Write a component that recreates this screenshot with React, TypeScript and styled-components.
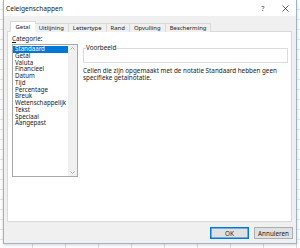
import { createGlobalStyle, styled } from 'styled-components';

const GlobalStyle = createGlobalStyle`
  html, body {
    margin: 0;
    padding: 0;
  }
  body {
    font-family: 'Noto Sans', 'Open Sans', sans-serif;
    color: #1a1a1a;
  }
  * {
    box-sizing: border-box;
  }
`;

const Desktop = styled.div`
  width: 300px;
  height: 248px;
  padding: 0 3px 4px 3px;
  background-color: #ffffff;
  background-image: repeating-linear-gradient(
      to right,
      transparent 0 32px,
      #dcdcdc 32px 33px
    ),
    repeating-linear-gradient(to bottom, transparent 0 9px, #e4e4e4 9px 10px);
  overflow: hidden;
`;

const Dialog = styled.div`
  height: 244px;
  display: flex;
  flex-direction: column;
  background: #f0f0f0;
  border: 1px solid #9db3c8;
  border-top: none;
  box-shadow: 0 1px 3px rgba(0, 0, 0, 0.18);
`;

const TitleBar = styled.div`
  height: 16px;
  flex: none;
  display: flex;
  align-items: center;
  padding: 1px 0 0 2px;
  background: #ffffff;
  font-size: 6.6px;
`;

const Title = styled.div`
  flex: 1;
`;

const TitleButton = styled.div`
  width: 22px;
  display: flex;
  justify-content: center;
  font-size: 6.6px;
  color: #333;
`;

const TabStrip = styled.div`
  flex: none;
  height: 15px;
  display: flex;
  align-items: flex-end;
  padding: 0 0 0 7px;
  position: relative;
  z-index: 1;
`;

const Tab = styled.div<{ $active?: boolean }>`
  height: ${(p) => (p.$active ? '11px' : '9px')};
  display: flex;
  align-items: center;
  justify-content: center;
  padding: 0 ${(p) => (p.$active ? '4.5px' : '4px')};
  margin: 0 ${(p) => (p.$active ? '-1px' : '0')} -1px;
  background: ${(p) => (p.$active ? '#ffffff' : '#f0f0f0')};
  border: 1px solid #d9d9d9;
  border-bottom: ${(p) => (p.$active ? '1px solid #ffffff' : 'none')};
  border-left-width: ${(p) => (p.$active ? '1px' : '0')};
  font-size: 5.95px;
  white-space: nowrap;

  &:first-child {
    border-left-width: 1px;
  }
`;

const Panel = styled.div`
  flex: 1;
  margin: 0 4px 0 3px;
  background: #ffffff;
  border: 1px solid #d9d9d9;
  display: flex;
  gap: 5px;
  padding: 3px 0 0 4px;
`;

const LeftColumn = styled.div`
  display: flex;
  flex-direction: column;
  gap: 1px;
`;

const Label = styled.div`
  font-size: 6.3px;
  line-height: 8px;

  & u {
    text-decoration-thickness: 0.5px;
  }
`;

const ListBox = styled.div`
  width: 66px;
  height: 133px;
  border: 1px solid #a8a8a8;
  display: flex;
  background: #ffffff;
`;

const Items = styled.div`
  flex: 1;
  padding-top: 1px;
`;

const Item = styled.div<{ $selected?: boolean }>`
  height: 6.75px;
  line-height: 6.75px;
  padding-left: 2px;
  font-size: 6.2px;
  white-space: nowrap;
  background: ${(p) => (p.$selected ? '#0078d7' : 'transparent')};
  color: ${(p) => (p.$selected ? '#ffffff' : '#1a1a1a')};
`;

const ScrollBar = styled.div`
  width: 9px;
  background: #f0f0f0;
  display: flex;
  flex-direction: column;
  justify-content: space-between;
  align-items: center;
  padding: 2px 0;
`;

const RightColumn = styled.div`
  flex: 1;
  padding: 13px 3px 0 0;
  display: flex;
  flex-direction: column;
  gap: 4px;
`;

const GroupBox = styled.fieldset`
  margin: 0;
  height: 18px;
  padding: 0 0 0 2px;
  border: 1px solid #dcdcdc;
  border-radius: 0;
  position: relative;
  top: -3px;
`;

const Legend = styled.legend`
  font-size: 6.3px;
  line-height: 6px;
  padding: 0;
  color: #1a1a1a;
`;

const Description = styled.div`
  font-size: 6.3px;
  line-height: 7px;
  margin-top: -3px;
`;

const ButtonBar = styled.div`
  flex: none;
  height: 21px;
  display: flex;
  justify-content: flex-end;
  align-items: center;
  gap: 5px;
  padding: 1px 3px 0 0;
`;

const Button = styled.button<{ $default?: boolean }>`
  width: 39px;
  height: 12px;
  padding: 0;
  font-family: inherit;
  font-size: 6.3px;
  color: #1a1a1a;
  background: #e1e1e1;
  border: 1px solid ${(p) => (p.$default ? '#0078d7' : '#adadad')};
  box-shadow: ${(p) => (p.$default ? 'inset 0 0 0 0.5px #0078d7' : 'none')};
`;

const Arrow = ({ up }: { up?: boolean }) => (
  <svg width="5" height="3" viewBox="0 0 5 3">
    <path
      d={up ? 'M0.5 2.5 L2.5 0.5 L4.5 2.5' : 'M0.5 0.5 L2.5 2.5 L4.5 0.5'}
      fill="none"
      stroke="#a0a0a0"
      strokeWidth="0.8"
    />
  </svg>
);

const CloseIcon = () => (
  <svg width="7" height="7" viewBox="0 0 7 7">
    <path d="M0.5 0.5 L6.5 6.5 M6.5 0.5 L0.5 6.5" stroke="#333" strokeWidth="0.8" />
  </svg>
);

const tabs = [
  'Getal',
  'Uitlijning',
  'Lettertype',
  'Rand',
  'Opvulling',
  'Bescherming',
];

const categories = [
  'Standaard',
  'Getal',
  'Valuta',
  'Financieel',
  'Datum',
  'Tijd',
  'Percentage',
  'Breuk',
  'Wetenschappelijk',
  'Tekst',
  'Speciaal',
  'Aangepast',
];

const App = () => {
  return (
    <>
      <GlobalStyle />
      <Desktop>
        <Dialog>
          <TitleBar>
            <Title>Celeigenschappen</Title>
            <TitleButton>?</TitleButton>
            <TitleButton>
              <CloseIcon />
            </TitleButton>
          </TitleBar>
          <TabStrip>
            {tabs.map((t, i) => (
              <Tab key={t} $active={i === 0}>
                {t}
              </Tab>
            ))}
          </TabStrip>
          <Panel>
            <LeftColumn>
              <Label>
                <u>C</u>ategorie:
              </Label>
              <ListBox>
                <Items>
                  {categories.map((c, i) => (
                    <Item key={c} $selected={i === 0}>
                      {c}
                    </Item>
                  ))}
                </Items>
                <ScrollBar>
                  <Arrow up />
                  <Arrow />
                </ScrollBar>
              </ListBox>
            </LeftColumn>
            <RightColumn>
              <GroupBox>
                <Legend>Voorbeeld</Legend>
              </GroupBox>
              <Description>
                Cellen die zijn opgemaakt met de notatie Standaard hebben geen
                <br />
                specifieke getalnotatie.
              </Description>
            </RightColumn>
          </Panel>
          <ButtonBar>
            <Button $default>OK</Button>
            <Button>Annuleren</Button>
          </ButtonBar>
        </Dialog>
      </Desktop>
    </>
  );
};

export default App;
